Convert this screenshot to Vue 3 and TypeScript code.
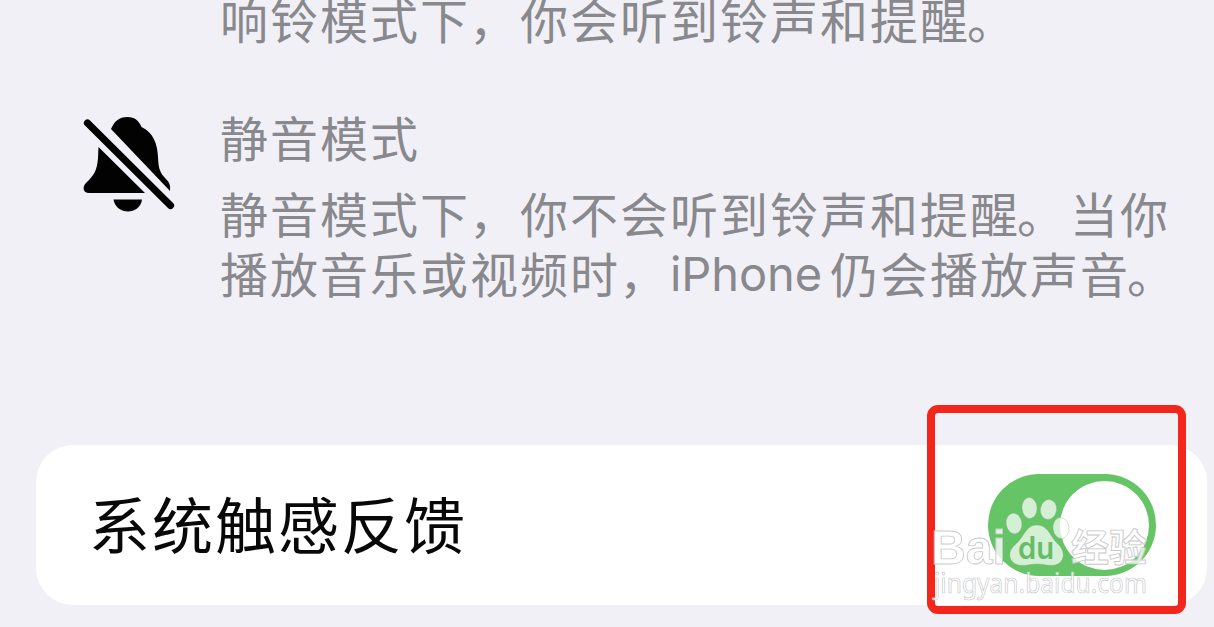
<script setup lang="ts">
import { ref } from 'vue'

const hapticsOn = ref<boolean>(true)
const toes = [
  { cx: 1014, cy: 523.5, rx: 7.8, ry: 10.4, angle: -8 },
  { cx: 1029.5, cy: 508, rx: 7.5, ry: 10.5, angle: -4 },
  { cx: 1048.5, cy: 509.5, rx: 8, ry: 10, angle: 10 },
  { cx: 1061, cy: 528, rx: 8, ry: 10.5, angle: -6 },
]
</script>

<template>
  <main class="page">
    <section class="modes">
      <p class="line ring">响铃模式下<span class="mark">，</span>你会听到铃声和提醒<span class="mark stop">。</span></p>
      <div class="mode">
        <svg class="bell" viewBox="0 0 100 104" width="100" height="104">
          <path d="M31 17C35 8 40 5 47.500 5C55 5 59 9 61.500 15C73 20 77.500 32 78 45C78.500 57 80 61 86 67C90 71 90.500 74 90 79Z" />
          <path d="M18.500 35L65 81H9C3 81 2 75 6 71C14 63 17 59 18 46Z" />
          <path d="M33.500 87.500H62C60 103.500 36 103.500 33.500 87.500Z" />
          <path class="slash" d="M7.500 11L90.500 93.500" />
        </svg>
        <div class="copy">
          <h2 class="line">静音模式</h2>
          <div class="description">
            <p class="line">静音模式下<span class="mark">，</span>你不会听到铃声和提醒<span class="mark stop">。</span>当你</p>
            <p class="line mixed"><span>播放音乐或视频时<span class="mark">，</span></span><span class="latin">iPhone</span><span>仍会播放声音<span class="mark stop">。</span></span></p>
          </div>
        </div>
      </div>
    </section>

    <section class="card">
      <span class="label">系统触感反馈</span>
      <button
        class="switch"
        :class="{ on: hapticsOn }"
        role="switch"
        :aria-checked="hapticsOn"
        aria-label="系统触感反馈"
        @click="hapticsOn = !hapticsOn"
      ><span class="knob"></span></button>
    </section>

    <div class="highlight"></div>

    <svg class="watermark" viewBox="0 0 1214 627" width="1214" height="627">
      <text class="brand" x="931" y="564" textLength="75" lengthAdjust="spacingAndGlyphs">Bai</text>
      <g class="paw">
        <ellipse
          v-for="toe in toes"
          :key="toe.cx"
          :cx="toe.cx"
          :cy="toe.cy"
          :rx="toe.rx"
          :ry="toe.ry"
          :transform="`rotate(${toe.angle} ${toe.cx} ${toe.cy})`"
        />
        <path d="M1037 525C1047 525 1050 535 1055 541C1060 546 1064 550 1063 557C1061 565 1054 566 1047 565C1040 563.500 1034 563.500 1027 565C1020 566 1012 565 1010 557C1009 549 1014 546 1019 541C1025 534 1027 525 1037 525Z" />
      </g>
      <text class="du" x="1018" y="559" textLength="36" lengthAdjust="spacingAndGlyphs">du</text>
      <text class="brand cjk" x="1071" y="561" textLength="76" lengthAdjust="spacingAndGlyphs">经验</text>
      <text class="url" x="934" y="593" textLength="213" lengthAdjust="spacingAndGlyphs">jingyan.baidu.com</text>
    </svg>
  </main>
</template>

<style>
body {
  margin: 0;
  background: #f1f0f6;
}
</style>

<style scoped>
.page {
  position: relative;
  box-sizing: border-box;
  width: 1214px;
  height: 627px;
  overflow: hidden;
  background: #f1f0f6;
  font-family: "Noto Sans CJK SC", sans-serif;
}
.modes {
  display: flow-root;
  height: 445px;
  color: #88888d;
}
.line {
  margin: 0;
  height: 59px;
  font-size: 48px;
  font-weight: 400;
  line-height: 59px;
  letter-spacing: 2px;
  white-space: nowrap;
}
.ring {
  padding-left: 220px;
  margin-top: -11px;
}
.mark {
  display: inline-block;
  width: 50px;
  text-indent: -1px;
}
.stop {
  text-indent: -3px;
}
.mode {
  display: flex;
  padding: 59px 0 0 80px;
}
.bell {
  flex: none;
  width: 100px;
  height: 104px;
  margin-top: 5px;
  fill: #020203;
}
.slash {
  fill: none;
  stroke: #020203;
  stroke-width: 7.2;
  stroke-linecap: round;
}
.copy {
  margin-left: 40px;
}
.description {
  margin-top: 17px;
}
.mixed {
  display: flex;
  line-height: 61px;
}
.latin {
  width: 160px;
  font-family: Inter, sans-serif;
  font-size: 47px;
  letter-spacing: -0.1px;
  line-height: 63px;
}
.card {
  display: flex;
  align-items: center;
  justify-content: space-between;
  box-sizing: border-box;
  height: 160px;
  margin: 0 7px 0 36px;
  padding: 0 51px 0 53px;
  border-radius: 37px;
  background: #fff;
}
.label {
  color: #080808;
  font-size: 61px;
  line-height: 80px;
  letter-spacing: 2px;
  margin-top: -5px;
}
.switch {
  display: flex;
  align-items: center;
  width: 168px;
  height: 102px;
  padding: 0 7px;
  border: 0;
  border-radius: 51px;
  background: #d8d8dc;
}
.switch.on {
  justify-content: flex-end;
  background: #65c466;
}
.knob {
  width: 89px;
  height: 89px;
  border-radius: 50%;
  background: #fff;
}
.highlight {
  position: absolute;
  left: 927px;
  top: 405px;
  box-sizing: border-box;
  width: 259px;
  height: 209px;
  border: 8px solid #f3261b;
  border-radius: 11px;
}
.watermark {
  position: absolute;
  left: 0;
  top: 0;
  pointer-events: none;
}
.brand,
.url {
  fill: rgba(255, 255, 255, 0.8);
  stroke: #c9c9cc;
  stroke-width: 0.9;
}
.brand {
  font-family: "Liberation Sans", sans-serif;
  font-size: 49px;
  font-weight: 700;
}
.cjk {
  font-family: "Noto Sans CJK SC", sans-serif;
  font-size: 38px;
}
.paw {
  fill: rgba(255, 255, 255, 0.73);
  stroke: rgba(150, 170, 150, 0.45);
  stroke-width: 0.8;
}
.du {
  fill: #65bd68;
  font-family: Inter, sans-serif;
  font-size: 31px;
  font-weight: 600;
}
.url {
  font-family: "Noto Sans", sans-serif;
  font-size: 27px;
  stroke-width: 0.7;
}
</style>
